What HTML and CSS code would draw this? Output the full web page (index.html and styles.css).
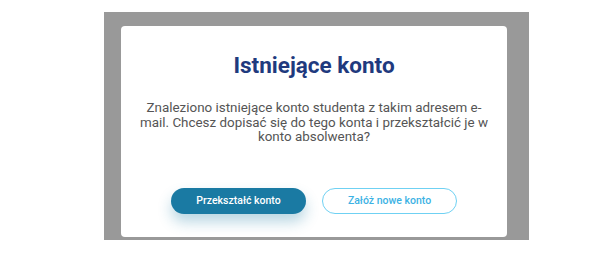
FILE: index.html
```html
<!DOCTYPE html>
<html lang="pl">
<head>
    <meta charset="UTF-8">
    <meta name="viewport" content="width=device-width, initial-scale=1.0">
    <title>Istniejące konto</title>
    <link rel="stylesheet" href="styles.css">
</head>
<body>
    <div class="overlay">
        <div class="modal">
            <h1 class="modal-title">Istniejące konto</h1>
            <p class="modal-text">Znaleziono istniejące konto studenta z takim adresem e-mail. Chcesz dopisać się do tego konta i przekształcić je w konto absolwenta?</p>
            <div class="modal-actions">
                <button type="button" class="btn btn-primary">Przekształć konto</button>
                <button type="button" class="btn btn-outline">Załóż nowe konto</button>
            </div>
        </div>
    </div>
</body>
</html>
```

FILE: styles.css
```css
body {
    font-family: Roboto, 'Liberation Sans', sans-serif;
    margin: 0;
    padding: 0;
    background-color: #fff;
}
.overlay {
    background-color: #999999;
    width: 425px;
    height: 228px;
    margin: 12px 0 0 104px;
    padding: 14px 22px 3px 17px;
    box-sizing: border-box;
}
.modal {
    background-color: white;
    border-radius: 4px;
    height: 100%;
    padding-top: 26px;
    box-sizing: border-box;
    text-align: center;
}
.modal-title {
    font-size: 22.5px;
    line-height: 26px;
    font-weight: 700;
    color: #1f3a7e;
    margin: 0;
}
.modal-text {
    font-size: 13.4px;
    line-height: 14.5px;
    color: #555;
    width: 352px;
    margin: 23px auto 0;
}
.modal-actions {
    display: flex;
    justify-content: center;
    gap: 16px;
    margin-top: 43px;
}
.btn {
    width: 135px;
    height: 26px;
    border-radius: 13px;
    font-family: Roboto, 'Liberation Sans', sans-serif;
    font-size: 10.5px;
    font-weight: 500;
    cursor: pointer;
    box-sizing: border-box;
    padding: 0;
}
.btn-primary {
    background-color: #1a7aa3;
    color: white;
    border: none;
    box-shadow: 0 8px 14px rgba(26, 122, 163, 0.3);
}
.btn-outline {
    background-color: white;
    color: #3cb2e4;
    border: 1.5px solid #6fd1f3;
}
```
